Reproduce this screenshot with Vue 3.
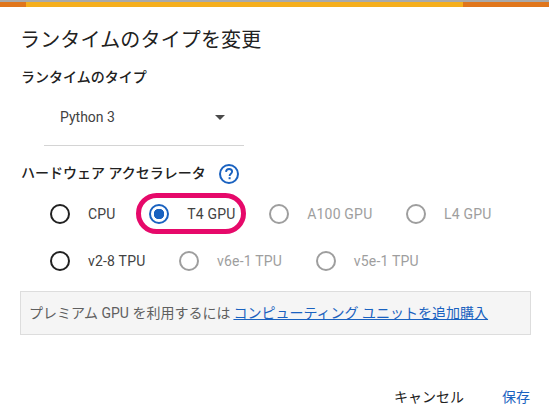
<script setup>
const rows = [
    [
        { label: 'CPU', disabled: false },
        { label: 'T4 GPU', checked: true, circled: true },
        { label: 'A100 GPU', disabled: true },
        { label: 'L4 GPU', disabled: true },
    ],
    [
        { label: 'v2-8 TPU', disabled: false },
        { label: 'v6e-1 TPU', disabled: true },
        { label: 'v5e-1 TPU', disabled: true },
    ],
];
</script>

<template>
    <div class="dialog">
        <div class="progress">
            <div class="progress-edge"></div>
            <div class="progress-fill"></div>
            <div class="progress-edge progress-edge-right"></div>
        </div>

        <h2 class="title">ランタイムのタイプを変更</h2>

        <div class="section-label">ランタイムのタイプ</div>
        <div class="select">
            <span>Python 3</span>
            <span class="select-arrow"></span>
        </div>

        <div class="section-label hardware-label">
            <span>ハードウェア アクセラレータ</span>
            <svg class="help" viewBox="0 0 24 24" width="24" height="24">
                <circle cx="12" cy="12" r="9" fill="none" stroke="#1a62c0" stroke-width="2" />
                <path d="M9 9.9c.1-1.8 1.3-2.9 3.1-2.9 1.7 0 3 1.1 3 2.6 0 2.1-2.5 2.2-2.5 4.4" fill="none" stroke="#1a62c0" stroke-width="1.9" />
                <rect x="11.6" y="15.2" width="2" height="2" fill="#1a62c0" />
            </svg>
        </div>

        <div v-for="(row, i) in rows" :key="i" class="radio-row">
            <div
                v-for="option in row"
                :key="option.label"
                :class="['radio', { 'radio-disabled': option.disabled, 'radio-checked': option.checked }]"
            >
                <span class="radio-circle"></span>
                <span>{{ option.label }}</span>
                <span v-if="option.circled" class="highlight"></span>
            </div>
        </div>

        <div class="notice">
            プレミアム GPU を利用するには
            <a class="notice-link">コンピューティング ユニットを追加購入</a>
        </div>

        <div class="actions">
            <button class="btn">キャンセル</button>
            <button class="btn btn-primary">保存</button>
        </div>
    </div>
</template>

<style>
html,
body {
    margin: 0;
    background: #ffffff;
}
</style>

<style scoped>
.dialog {
    width: 549px;
    height: 419px;
    overflow: hidden;
    box-sizing: border-box;
    background: #ffffff;
    color: #212121;
    font-family: Roboto, "Noto Sans CJK JP", sans-serif;
    font-size: 14px;
}

.progress {
    display: flex;
    height: 5px;
    border-top: 2px solid #a9a9a9;
}

.progress-edge {
    width: 26px;
    background: #e0761c;
}

.progress-edge-right {
    width: 86px;
}

.progress-fill {
    flex: 1;
    background: #f5ae1c;
}

.title {
    margin: 21px 0 0 20px;
    font-size: 20px;
    font-weight: 400;
    letter-spacing: 0.15px;
    line-height: 24px;
}

.section-label {
    margin: 15px 0 0 21px;
    font-weight: 500;
    line-height: 20px;
}

.select {
    display: flex;
    align-items: center;
    justify-content: space-between;
    box-sizing: border-box;
    width: 200px;
    height: 59px;
    margin: 0 0 0 44px;
    padding: 2px 19px 0 16px;
    border-bottom: 1px solid #d4d4d4;
    color: #424242;
}

.select-arrow {
    width: 0;
    height: 0;
    border-left: 5px solid transparent;
    border-right: 5px solid transparent;
    border-top: 5px solid #4a4a4a;
}

.hardware-label {
    display: flex;
    align-items: center;
    gap: 11px;
    margin-top: 14px;
}

.help {
    flex: none;
    margin-top: 2px;
}

.radio-row {
    display: flex;
    gap: 33.6px;
    height: 47px;
    align-items: center;
    padding-left: 50px;
    letter-spacing: 0.2px;
}

.hardware-label + .radio-row {
    margin-top: 4px;
}

.radio {
    position: relative;
    display: flex;
    align-items: center;
    gap: 18px;
    color: #424242;
}

.radio-circle {
    box-sizing: border-box;
    width: 20px;
    height: 20px;
    border: 2px solid #212121;
    border-radius: 50%;
}

.radio-disabled {
    color: #9e9e9e;
}

.radio-disabled .radio-circle {
    border-color: #9e9e9e;
}

.radio-checked .radio-circle {
    border-color: #1a62c0;
    background: radial-gradient(circle, #1a62c0 0, #1a62c0 5px, transparent 5.5px);
}

.highlight {
    position: absolute;
    left: -13px;
    top: -11px;
    width: 110px;
    height: 41px;
    box-sizing: border-box;
    border: 5px solid #e6096a;
    border-radius: 21px;
}

.notice {
    box-sizing: border-box;
    height: 44px;
    margin: 7px 18px 0 20px;
    padding: 0 8px 2px;
    display: flex;
    align-items: center;
    gap: 3px;
    background: #f5f5f5;
    border: 1px solid #dddddd;
    color: #5f5f5f;
}

.notice-link {
    color: #1a62c0;
    text-decoration: underline;
}

.actions {
    display: flex;
    justify-content: flex-end;
    gap: 38px;
    margin: 52px 19px 0 0;
}

.btn {
    padding: 0;
    border: 0;
    background: none;
    color: #212121;
    font: inherit;
    line-height: 20px;
}

.btn-primary {
    color: #1a62c0;
}
</style>
